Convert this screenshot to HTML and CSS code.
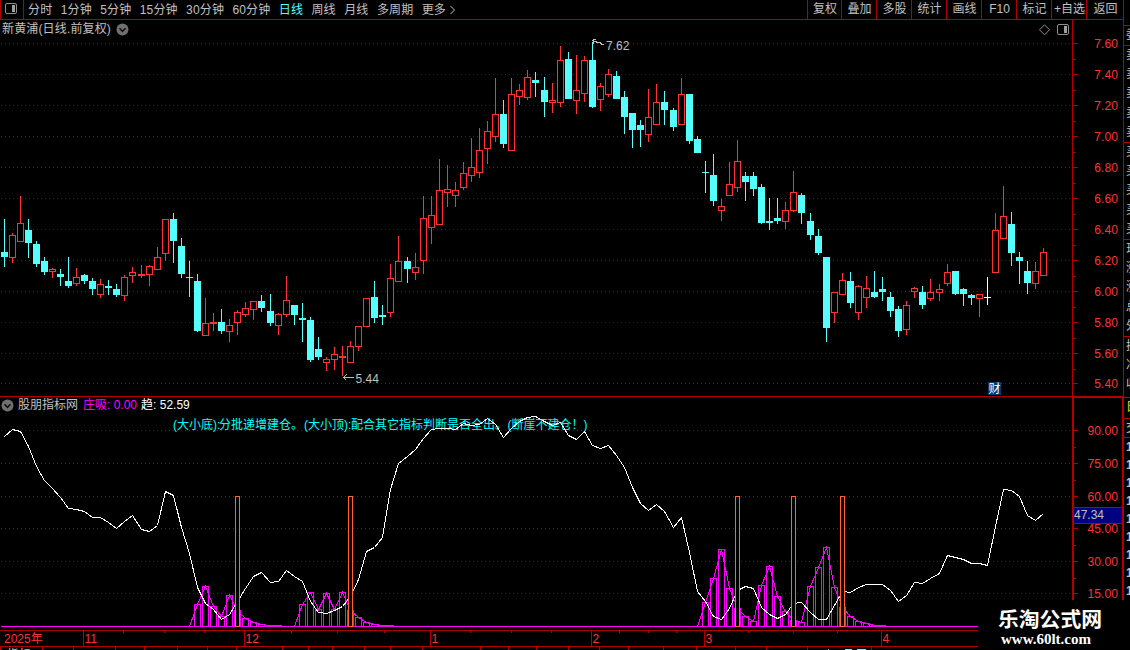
FILE: index.html
```html
<!DOCTYPE html>
<html lang="zh">
    <head>
        <meta charset="utf-8">
        <title>新黄浦 日线</title>
        <link rel="stylesheet" href="styles.css">
    </head>
    <body>
        <div class="toolbar">
            <div class="toggle">
                <svg width="13" height="12"><rect x="0.5" y="0.5" width="11" height="10" rx="1.5" class="icon-line"/><rect x="7" y="2" width="3" height="7" class="icon-fill"/></svg>
            </div>
            <ul class="periods">
                <li>分时</li><li>1分钟</li><li>5分钟</li><li>15分钟</li><li>30分钟</li><li>60分钟</li><li class="current">日线</li><li>周线</li><li>月线</li><li>多周期</li><li>更多<svg width="7" height="10"><path d="M1.5 1l4 4-4 4" class="icon-line light"/></svg></li>
            </ul>
            <ul class="tools">
                <li>复权</li><li>叠加</li><li>多股</li><li>统计</li><li>画线</li><li>F10</li><li>标记</li><li>+自选</li><li>返回</li>
            </ul>
        </div>
        <div class="main">
            <div class="charts">
                <div class="panel">
                    <div class="caption">
                        <span class="name">新黄浦(日线.前复权)</span>
                        <svg width="13" height="13"><circle cx="6.5" cy="6.5" r="6" class="dot"/><path d="M3.5 5.3l3 3 3-3" class="chev"/></svg>
                    </div>
                    <div class="corner">
                        <svg width="11" height="12"><path d="M5.5 0.8l5 5-5 5-5-5z" class="icon-line"/></svg>
                        <svg width="13" height="12"><rect x="0.5" y="0.5" width="11" height="10" rx="1.5" class="icon-line"/><rect x="7" y="2" width="3" height="7" class="icon-fill"/></svg>
                    </div>
                    <svg id="kline" class="plot" width="1124" height="377" viewBox="0 20 1124 377"></svg>
                </div>
                <div class="panel">
                    <div class="caption sub">
                        <svg width="13" height="13"><circle cx="6.5" cy="6.5" r="6" class="dot"/><path d="M3.5 5.3l3 3 3-3" class="chev"/></svg>
                        <span>股朋指标网</span>
                        <span class="absorb">庄吸: 0.00</span>
                        <span class="trend">趋: 52.59</span>
                    </div>
                    <svg id="indicator" class="plot" width="1124" height="233" viewBox="0 397 1124 233"></svg>
                </div>
                <svg id="dates" class="plot" width="1124" height="20" viewBox="0 630 1124 20"></svg>
            </div>
            <div class="side">
                <div class="group head"><b>委</b></div>
                <div class="group"><b>卖</b><b>卖</b><b>卖</b><b>卖</b><b>卖</b></div>
                <div class="group"><b>买</b><b>买</b><b>买</b><b>买</b><b>买</b></div>
                <div class="group"><b>现</b><b>涨</b><b>涨</b><b>总</b><b>外</b></div>
                <div class="group short"><b>换</b><b>净</b><b>收</b></div>
                <div class="group tab"><b>日</b></div>
                <div class="group deal"><b>交</b></div>
                <div class="ticks"><b>1</b><b>1</b><b>1</b><b>1</b><b>1</b><b>1</b><b>1</b><b>1</b><b>1</b></div>
            </div>
        </div>
        <div class="brand">
            <strong>乐淘公式网</strong>
            <em>www.60lt.com</em>
        </div>
        <script src="chart.js"></script>
    </body>
</html>
```

FILE: styles.css
```css
*{
    margin:            0;
    padding:           0;
    box-sizing:        border-box;
}
body{
    width:             1130px;
    height:            650px;
    overflow:          hidden;
    position:          relative;
    background:        #000;
    color:             #c0c0c0;
    font:              12px/18px "Liberation Sans", "Noto Sans CJK SC", sans-serif;
}
ul{
    list-style:        none;
    display:           flex;
}
svg{
    display:           block;
}
.toolbar{
    width:             1124px;
    height:            20px;
    display:           flex;
    border-bottom:     1px solid #b00000;
    border-right:      1px solid #b00000;
}
.toggle{
    width:             24px;
    padding:           3px 0 0 4px;
    border-left:       1px solid #b00000;
    border-right:      1px solid #b00000;
}
.periods{
    flex:              1;
    gap:               8.4px;
    padding-left:      4px;
    white-space:       nowrap;
}
.periods li{
    display:           flex;
    align-items:       center;
    letter-spacing:    0.15px;
}
.periods .current{
    color:             #54ffff;
}
.periods svg{
    margin-left:       3px;
}
.tools li{
    width:             35px;
    padding-left:      1px;
    line-height:       19px;
    text-align:        center;
    border-left:       1px solid #b00000;
    white-space:       nowrap;
}
.tools li:first-child{
    width:             34px;
}
.tools li:last-child{
    width:             37px;
}
.icon-line{
    fill:              none;
    stroke:            #909090;
}
.icon-line.light{
    stroke:            #c0c0c0;
}
.icon-fill{
    fill:              #a0a0a0;
}
.dot{
    fill:              #707070;
}
.chev{
    fill:              none;
    stroke:            #101010;
    stroke-width:      1.6;
}
.main{
    display:           flex;
    height:            630px;
}
.charts{
    width:             1124px;
}
.panel{
    position:          relative;
}
/* captions lie over the plots */
.caption{
    position:          absolute;
    left:              2px;
    top:               0;
    display:           flex;
    align-items:       center;
    gap:               5px;
    white-space:       nowrap;
}
.caption.sub{
    left:              1px;
    top:               -1px;
    gap:               4px;
}
.name{
    letter-spacing:    0.15px;
}
.absorb{
    color:             #f0f;
    margin-left:       1px;
}
.trend{
    color:             #fff;
}
.corner{
    position:          absolute;
    left:              1039px;
    top:               4px;
    display:           flex;
    gap:               7px;
}
.plot{
    shape-rendering:   crispEdges;
}
.plot text{
    font:              12px "Liberation Sans", "Noto Sans CJK SC", sans-serif;
}
.line{
    fill:              none;
    stroke:            #b00000;
}
.grid{
    stroke:            #a00000;
    stroke-dasharray:  1 3;
}
.plot .scale{
    fill:              #ff3232;
    text-anchor:       end;
    letter-spacing:    0.1px;
}
.month{
    fill:              #ff3232;
}
.up{
    fill:              #000;
    stroke:            #ff3232;
}
.wick-up{
    stroke:            #ff3232;
}
.down{
    fill:              #54ffff;
}
.wick-down{
    stroke:            #54ffff;
}
.flat{
    fill:              #fff;
}
.wick-flat{
    stroke:            #fff;
}
.note{
    fill:              #c0c0c0;
}
.arrow{
    fill:              none;
    stroke:            #c0c0c0;
}
.badge{
    fill:              #003c70;
}
.white{
    fill:              #fff;
}
.hint{
    fill:              #00ffff;
}
.bar{
    fill:              none;
    stroke:            #f0f;
}
.signal{
    fill:              #000;
    stroke:            #ff6432;
}
.curve{
    fill:              none;
    stroke:            #fff;
}
.now{
    fill:              #000080;
}
.side{
    width:             6px;
    overflow:          hidden;
    padding-top:       5px;
}
.side b{
    display:           block;
    width:             14px;
    margin-left:       2px;
    font-weight:       normal;
    line-height:       19.2px;
}
.group{
    height:            97px;
    border-top:        1px solid #b00000;
    overflow:          hidden;
}
.group.head{
    height:            20px;
}
.group.short{
    height:            61px;
}
.group.tab{
    height:            21px;
    color:             #e0e000;
}
.group.deal{
    height:            19px;
}
.ticks{
    border-top:        1px solid #b00000;
    height:            163px;
    overflow:          hidden;
}
.ticks b{
    line-height:       18px;
    font-weight:       bold;
}
.brand{
    position:          absolute;
    left:              978px;
    top:               600px;
    width:             152px;
    height:            50px;
    padding:           6px 0 0 20px;
    background:        #000;
    color:             #fff;
}
.brand strong{
    display:           block;
    font:              bold 20.8px/25px "Noto Sans CJK SC", sans-serif;
    white-space:       nowrap;
}
.brand em{
    display:           block;
    padding-left:      3px;
    font:              normal bold 15px/16px "Liberation Serif", serif;
}
```

FILE: chart.js
```js
// 每根K线: 最高, 实体上沿, 实体下沿, 最低, 类型 (r 阳 c 阴 w 平)
var candles = [
    [219,252,257,267,'c'],[233,235,258,263,'r'],[196,223,242,242,'r'],[219,230,243,258,'c'],[241,244,264,267,'c'],
    [257,261,272,275,'c'],[268,269,272,278,'r'],[269,274,277,286,'c'],[257,281,286,288,'c'],[268,277,284,286,'r'],
    [274,275,281,284,'c'],[278,281,289,295,'c'],[279,284,295,298,'r'],[280,286,288,295,'c'],[284,289,295,297,'c'],
    [275,277,296,301,'r'],[267,272,276,283,'r'],[265,274,276,278,'r'],[265,266,275,286,'r'],[247,257,270,270,'r'],
    [219,219,254,261,'r'],[213,219,241,263,'c'],[238,246,274,278,'c'],[261,277,278,297,'c'],[274,281,331,332,'c'],
    [298,323,336,336,'r'],[313,322,324,331,'r'],[309,322,331,334,'c'],[319,325,332,342,'r'],[310,312,323,335,'r'],
    [302,308,315,317,'r'],[301,301,310,320,'r'],[295,301,308,312,'c'],[294,311,323,326,'c'],[313,314,326,335,'r'],
    [276,300,315,317,'r'],[305,305,315,325,'c'],[303,318,320,342,'c'],[317,320,360,362,'c'],[337,349,357,360,'c'],
    [357,359,363,371,'r'],[347,354,360,370,'r'],[346,356,358,376,'r'],[341,346,363,363,'r'],[326,326,347,351,'r'],
    [298,298,327,327,'r'],[281,297,318,323,'c'],[305,315,317,325,'c'],[264,278,313,317,'r'],[236,261,282,282,'r'],
    [257,261,269,283,'c'],[253,267,273,280,'r'],[196,218,261,274,'r'],[196,215,228,244,'r'],[159,190,225,225,'r'],
    [165,189,193,207,'r'],[182,190,196,207,'r'],[162,173,188,190,'r'],[138,167,176,182,'r'],[128,150,173,178,'r'],
    [121,131,149,164,'r'],[78,114,137,142,'r'],[100,114,144,148,'c'],[78,94,151,151,'r'],[84,90,97,105,'r'],
    [70,77,98,100,'r'],[72,80,83,97,'c'],[77,90,102,117,'c'],[83,100,103,113,'r'],[46,60,103,107,'r'],
    [52,59,99,99,'c'],[55,90,101,114,'r'],[56,60,94,102,'r'],[42,60,107,108,'c'],[83,86,100,111,'r'],
    [69,74,95,97,'r'],[71,76,99,99,'c'],[91,97,117,134,'c'],[113,113,130,148,'c'],[120,125,130,147,'c'],
    [89,117,135,142,'r'],[84,102,125,125,'r'],[91,102,110,125,'c'],[108,110,127,131,'c'],[78,94,125,125,'r'],
    [94,94,141,144,'c'],[136,139,153,153,'c'],[161,172,173,193,'c'],[154,175,201,206,'c'],[199,206,211,221,'r'],
    [162,184,196,196,'r'],[140,161,188,192,'r'],[172,176,182,201,'c'],[172,176,189,196,'c'],[184,187,223,224,'c'],
    [198,221,223,230,'c'],[198,218,221,224,'c'],[202,210,222,229,'r'],[171,192,211,212,'r'],[193,195,213,224,'c'],
    [213,221,235,240,'c'],[229,236,253,255,'c'],[257,257,328,342,'c'],[292,292,313,323,'r'],[273,280,295,295,'r'],
    [272,281,303,308,'c'],[285,286,313,320,'r'],[276,288,298,308,'r'],[271,292,297,298,'c'],[277,289,292,301,'c'],
    [292,297,311,317,'c'],[306,309,331,337,'c'],[301,305,330,335,'r'],[287,288,292,298,'r'],[286,292,305,309,'c'],
    [279,292,299,301,'r'],[284,289,293,301,'r'],[264,272,284,286,'r'],[271,271,294,295,'c'],[288,289,294,306,'c'],
    [294,295,298,305,'c'],[294,294,299,317,'r'],[277,297,298,305,'w'],[213,230,273,273,'r'],[186,216,239,239,'r'],
    [212,224,253,266,'c'],[252,257,261,284,'c'],[261,271,283,294,'c'],[262,271,284,289,'r'],[248,252,276,276,'r']
];
// 趋势线
var trend = [
    436,429,431,446,466,480,488,497,508,509,511,517,517,522,528,521,515,529,531,525,
    491,495,527,553,587,603,609,619,614,601,588,576,572,582,581,570,576,581,601,612,
    613,610,606,596,579,551,547,537,489,463,456,449,438,429,428,428,429,423,425,424,
    418,424,437,428,421,417,416,421,425,422,435,439,431,445,448,445,455,467,487,503,
    510,504,511,527,517,552,591,601,616,619,608,590,586,588,607,614,618,614,603,602,
    612,619,619,605,591,592,587,584,584,584,590,601,595,582,583,578,573,555,557,559,
    563,563,565,526,489,490,496,515,520,513
];
// 庄吸: 起始序号和各柱高度
var absorb = [
    {from: 24, y: [604,586,606,616,595,610,618,622,624,625,625]},
    {from: 37, y: [604,592,609,593,609,592,610,617,622,624,625,625]},
    {from: 87, y: [602,578,549,588,608,616,621,585,566,596,611,620,622,586,567,547,587,607,616,621,623,625,625]}
];
var signals = [29, 43, 91, 98, 104];

function px(n) {
    return Math.floor(4.015 + 8.0603 * n);
}
function h(x1, x2, y, c) {
    return '<path d="M' + x1 + ' ' + (y + 0.5) + 'H' + x2 + '" class="' + (c || 'line') + '"/>';
}
function v(x, y1, y2, c) {
    return '<path d="M' + (x + 0.5) + ' ' + y1 + 'V' + y2 + '" class="' + (c || 'line') + '"/>';
}
function box(x, y, w, ht, c) {
    return '<rect x="' + x + '" y="' + y + '" width="' + w + '" height="' + ht + '" class="' + c + '"/>';
}
function text(x, y, s, c) {
    return '<text x="' + x + '" y="' + y + '" class="' + c + '">' + s + '</text>';
}

function drawKline() {
    var out = '';
    var rows = [43, 74, 105, 136, 167, 198, 229, 260, 291, 322, 353, 383];
    rows.forEach(function (y, i) {
        out += h(1, 1072, y, 'grid') + h(1073, 1078, y);
        if (i < 11) out += h(1073, 1075, y + 16);
        out += text(1118, y + 5, (7.6 - i * 0.2).toFixed(2), 'scale');
    });
    candles.forEach(function (k, n) {
        var x = px(n);
        var name = k[4] == 'r' ? 'up' : k[4] == 'c' ? 'down' : 'flat';
        out += v(x, k[0], k[3], 'wick-' + name);
        if (name == 'up') {
            out += box(x - 2.5, k[1] + 0.5, 6, k[2] - k[1] - 1, name);
        } else {
            out += box(x - 3, k[1], 7, k[2] - k[1], name);
        }
    });
    out += v(1072, 20, 397) + v(1123, 20, 397) + h(0, 1124, 396);
    out += '<path d="M593 39.5H596M592 40.5H594M593.5 40V44M594 41.5H597M596 42.5H601M600 43.5H602M601 44.5H604" class="arrow"/>';
    out += text(606, 50, '7.62', 'note');
    out += '<path d="M343 377.5H354M343.5 377.5L346.5 374.5M343.5 377.5L346.5 380.5" class="arrow"/>';
    out += text(355.5, 383, '5.44', 'note');
    out += box(988, 382, 13, 13, 'badge') + text(988.5, 393, '财', 'white');
    document.getElementById('kline').innerHTML = out;
}

function drawIndicator() {
    var out = '';
    var rows = [430, 463, 496, 528, 561, 593];
    rows.forEach(function (y, i) {
        out += h(1, 1072, y, 'grid') + h(1074, 1078, y);
        if (i < 5) out += h(1074, 1076, y + 17);
        out += text(1118, y + 5, (90 - i * 15).toFixed(2), 'scale');
    });
    out += '<text y="429" class="hint"><tspan x="173">(大小底):</tspan><tspan x="219">分批递增建仓。</tspan><tspan x="304">(大小顶):</tspan><tspan x="351">配合其它指标判断是否全出。</tspan><tspan x="507.5">(断崖不建仓！</tspan><tspan x="583.5">)</tspan></text>';
    out += h(1, 978, 626, 'bar');
    absorb.forEach(function (g) {
        var d = 'M' + (px(g.from - 1) + 0.5) + ' 626.5';
        g.y.forEach(function (y, i) {
            var x = px(g.from + i);
            d += 'L' + (x + 0.5) + ' ' + (y + 0.5);
            out += box(x - 2.5, y + 0.5, 6, 626 - y, 'bar');
        });
        out += '<path d="' + d + '" class="bar"/>';
    });
    out += '<polyline class="curve" points="' + trend.map(function (y, n) {
        return (px(n) + 0.5) + ',' + (y + 0.5);
    }).join(' ') + '"/>';
    signals.forEach(function (n) {
        out += box(px(n) - 1.5, 496.5, 4, 130, 'signal');
    });
    out += h(1072, 1124, 397) + v(1072, 397, 600) + v(1073, 397, 600) + v(1122, 397, 600) + v(1123, 397, 600);
    out += box(1074, 507, 48, 17, 'now') + h(1074, 1122, 507) + h(1074, 1122, 523);
    out += text(1074, 519, '47.34', 'note');
    document.getElementById('indicator').innerHTML = out;
}

function drawDates() {
    var out = h(0, 978, 630) + h(0, 978, 646) + text(4, 643, '2025年', 'month');
    [[83, 11], [244, 12], [430, 1], [591, 2], [704, 3], [881, 4]].forEach(function (m) {
        out += v(m[0], 630, 646) + text(m[0] + 1.5, 643, m[1], 'month');
    });
    [123, 164, 204, 291, 337, 384, 470, 511, 551, 619, 648, 676, 748, 793, 837].forEach(function (x) {
        out += v(x, 631, 633);
    });
    // 下方标签栏露出的部分
    [0, 42, 73, 115, 144, 177, 207, 236, 282, 308, 332, 364, 390, 422, 480, 508, 536, 568, 599, 628, 663, 696, 735, 766, 807, 871].forEach(function (x) {
        out += v(x, 647, 650);
    });
    out += text(7, 659, '指标', 'note') + h(845, 852, 649, 'wick-down') + h(857, 866, 649, 'wick-down') + h(828, 829, 649, 'arrow');
    document.getElementById('dates').innerHTML = out;
}

drawKline();
drawIndicator();
drawDates();
```
